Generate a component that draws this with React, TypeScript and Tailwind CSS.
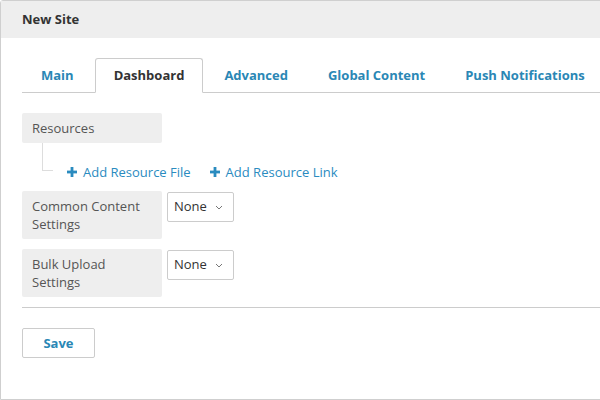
import React from "react";

function PlusIcon() {
  return (
    <svg width="10" height="10" viewBox="0 0 10 10" className="shrink-0">
      <rect x="3.6" y="0" width="2.8" height="10" fill="#2a8bbf" />
      <rect x="0" y="3.6" width="10" height="2.8" fill="#2a8bbf" />
    </svg>
  );
}

function Chevron() {
  return (
    <svg width="8" height="5" viewBox="0 0 8 5" className="shrink-0">
      <path d="M1 1 L4 4 L7 1" fill="none" stroke="#777" strokeWidth="1" />
    </svg>
  );
}

function SelectBox() {
  return (
    <div className="ml-[5px] mt-px flex h-[30px] w-[67px] items-center justify-between rounded-[2px] border border-[#ccc] bg-white pl-[6px] pr-[10px] text-[13px] text-[#333]">
      <span>None</span>
      <Chevron />
    </div>
  );
}

export default function App() {
  const tabs = ["Main", "Dashboard", "Advanced", "Global Content", "Push Notifications"];
  return (
    <div
      className="h-[400px] w-[600px] overflow-hidden bg-white"
      style={{ fontFamily: '"Open Sans", "Noto Sans", sans-serif' }}
    >
      <div className="flex h-[400px] w-[660px] flex-col rounded-tl-[3px] border border-[#cfcfcf]">
        <div className="flex h-[37px] items-center bg-[#eeeeee] pl-[21px] pt-px text-[13px] font-bold text-[#333]">
          New Site
        </div>
        <div className="pl-[21px] pt-[20px]">
          <div className="flex border-b border-[#ccc]">
            {tabs.map((t) => {
              const active = t === "Dashboard";
              return (
                <div
                  key={t}
                  className={
                    active
                      ? "-mb-px mr-[2px] rounded-t-[3px] border border-[#ccc] border-b-white bg-white px-[18px] py-[7px] text-[13px] font-bold leading-[19px] text-[#333]"
                      : "-mb-px mr-[2px] rounded-t-[3px] border border-transparent px-[18px] py-[7px] text-[13px] font-bold leading-[19px] text-[#2a87b5]"
                  }
                >
                  {t}
                </div>
              );
            })}
          </div>

          <div className="mt-[20px] flex h-[30px] w-[140px] items-center rounded-[2px] bg-[#eeeeee] pl-[10px] pt-px text-[13px] text-[#555]">
            Resources
          </div>

          <div className="flex items-start">
            <div className="ml-[20px] h-[28px] w-[11px] border-b border-l border-[#ddd]" />
            <div className="ml-[14px] mt-[20px] flex items-center text-[13px] leading-[18px] text-[#2a8bbf]">
              <PlusIcon />
              <span className="ml-[6px]">Add Resource File</span>
              <span className="ml-[19px]">
                <PlusIcon />
              </span>
              <span className="ml-[6px]">Add Resource Link</span>
            </div>
          </div>

          <div className="mt-[10px] flex items-start">
            <div className="w-[140px] rounded-[2px] bg-[#eeeeee] px-[10px] py-[6px] text-[13px] leading-[18px] text-[#555]">
              Common Content Settings
            </div>
            <SelectBox />
          </div>

          <div className="mt-[10px] flex items-start">
            <div className="w-[140px] rounded-[2px] bg-[#eeeeee] px-[10px] py-[6px] text-[13px] leading-[18px] text-[#555]">
              Bulk Upload Settings
            </div>
            <SelectBox />
          </div>

          <div className="mt-[10px] border-t border-[#ccc]" />

          <div className="mt-[20px] flex h-[30px] w-[73px] items-center justify-center rounded-[2px] border border-[#ccc] bg-white pt-px text-[13px] font-bold text-[#2a87b5]">
            Save
          </div>
        </div>
      </div>
    </div>
  );
}
